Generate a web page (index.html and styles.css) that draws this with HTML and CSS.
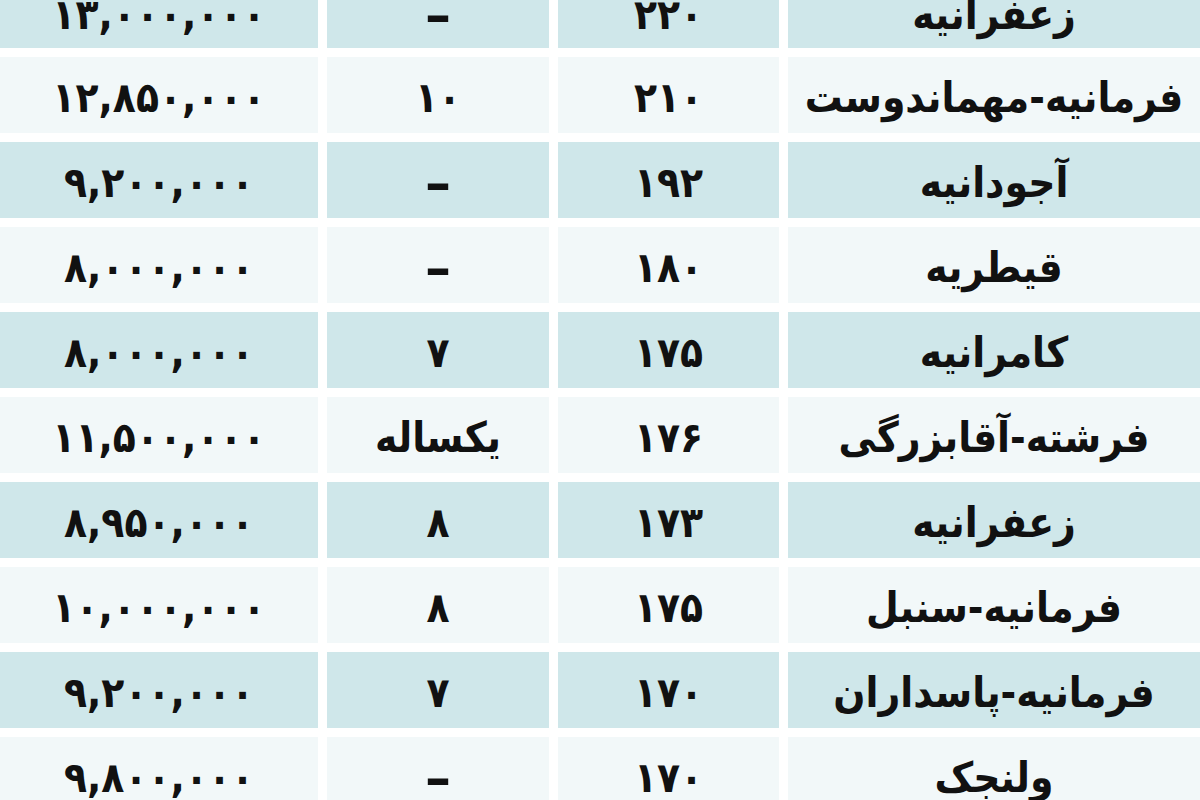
FILE: index.html
```html
<!DOCTYPE html>
<html lang="fa" dir="rtl">
<head>
<meta charset="utf-8">
<title>جدول قیمت</title>
<link rel="stylesheet" href="styles.css">
</head>
<body>
<div class="table">
  <div class="row blue"><div class="cell">زعفرانیه</div><div class="cell">۲۲۰</div><div class="cell dash">–</div><div class="cell">۱۳,۰۰۰,۰۰۰</div></div>
  <div class="row light"><div class="cell">فرمانیه-مهماندوست</div><div class="cell">۲۱۰</div><div class="cell">۱۰</div><div class="cell">۱۲,۸۵۰,۰۰۰</div></div>
  <div class="row blue"><div class="cell">آجودانیه</div><div class="cell">۱۹۲</div><div class="cell dash">–</div><div class="cell">۹,۲۰۰,۰۰۰</div></div>
  <div class="row light"><div class="cell">قیطریه</div><div class="cell">۱۸۰</div><div class="cell dash">–</div><div class="cell">۸,۰۰۰,۰۰۰</div></div>
  <div class="row blue"><div class="cell">کامرانیه</div><div class="cell">۱۷۵</div><div class="cell">۷</div><div class="cell">۸,۰۰۰,۰۰۰</div></div>
  <div class="row light"><div class="cell">فرشته-آقابزرگی</div><div class="cell">۱۷۶</div><div class="cell">یکساله</div><div class="cell">۱۱,۵۰۰,۰۰۰</div></div>
  <div class="row blue"><div class="cell">زعفرانیه</div><div class="cell">۱۷۳</div><div class="cell">۸</div><div class="cell">۸,۹۵۰,۰۰۰</div></div>
  <div class="row light"><div class="cell">فرمانیه-سنبل</div><div class="cell">۱۷۵</div><div class="cell">۸</div><div class="cell">۱۰,۰۰۰,۰۰۰</div></div>
  <div class="row blue"><div class="cell">فرمانیه-پاسداران</div><div class="cell">۱۷۰</div><div class="cell">۷</div><div class="cell">۹,۲۰۰,۰۰۰</div></div>
  <div class="row light"><div class="cell">ولنجک</div><div class="cell">۱۷۰</div><div class="cell dash">–</div><div class="cell">۹,۸۰۰,۰۰۰</div></div>
</div>
</body>
</html>
```

FILE: styles.css
```css
html, body {
  margin: 0;
  padding: 0;
  background: #ffffff;
  overflow: hidden;
}
body {
  width: 1200px;
  height: 800px;
}
.table {
  display: flex;
  flex-direction: column;
  gap: 9px;
  margin-top: -28px;
  font-family: "DejaVu Sans Condensed", "DejaVu Sans", sans-serif;
  font-weight: bold;
  color: #111111;
}
.row {
  display: grid;
  grid-template-columns: 412px 221px 222px 318px;
  column-gap: 9px;
  height: 76px;
}
.row:first-child {
  padding-top: 4px;
  height: 72px;
}
.cell {
  display: flex;
  align-items: center;
  justify-content: center;
  padding-top: 6px;
  font-size: 42px;
  line-height: 1;
  white-space: nowrap;
}
.blue .cell {
  background: #cfe7ea;
}
.light .cell {
  background: #f2f8f9;
}
.dash {
  font-size: 52px;
  font-family: "DejaVu Sans", sans-serif;
}
```
